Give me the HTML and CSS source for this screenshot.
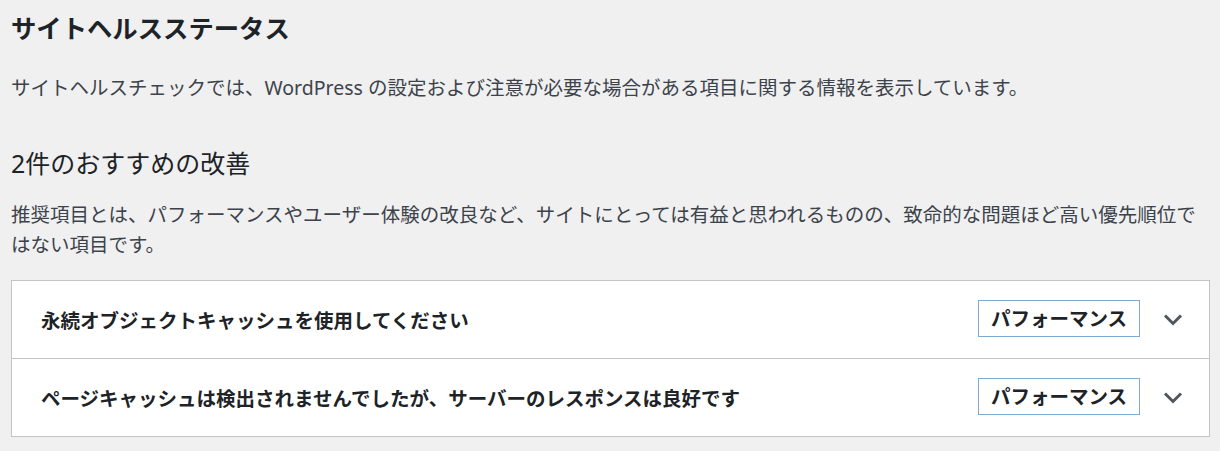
FILE: index.html
```html
<html>
    <head>
        <title>サイトヘルスステータス</title>
        <link rel="stylesheet" href="styles.css">
    </head>
    <body>
        <div class="wrap">
            <h1 class="title">サイトヘルスステータス</h1>
            <p class="intro">サイトヘルスチェックでは、WordPress の設定および注意が必要な場合がある項目に関する情報を表示しています。</p>

            <h2 class="issues-title">2件のおすすめの改善</h2>
            <p class="issues-desc">推奨項目とは、パフォーマンスやユーザー体験の改良など、サイトにとっては有益と思われるものの、致命的な問題ほど高い優先順位ではない項目です。</p>

            <!-- recommended items -->
            <div class="accordion">
                <div class="accordion-row">
                    <span class="accordion-title">永続オブジェクトキャッシュを使用してください</span>
                    <span class="badge">パフォーマンス</span>
                    <svg class="chevron" width="20" height="14" viewBox="0 0 20 14"><polyline points="2,2.5 10,10.5 18,2.5" fill="none" stroke="#50575e" stroke-width="3"/></svg>
                </div>
                <div class="accordion-row">
                    <span class="accordion-title">ページキャッシュは検出されませんでしたが、サーバーのレスポンスは良好です</span>
                    <span class="badge">パフォーマンス</span>
                    <svg class="chevron" width="20" height="14" viewBox="0 0 20 14"><polyline points="2,2.5 10,10.5 18,2.5" fill="none" stroke="#50575e" stroke-width="3"/></svg>
                </div>
            </div>
        </div>
    </body>
</html>
```

FILE: styles.css
```css
body {
    margin: 0;
    background: #f0f0f1;
    color: #3c434a;
    font-family: "Noto Sans", "Noto Sans CJK JP", sans-serif;
}

.wrap {
    width: 1199px;
    padding: 12px 0 0 11px;
}

.title {
    margin: 0;
    font-size: 25.35px;
    line-height: 33px;
    font-weight: bold;
    color: #1d2327;
}

.intro {
    margin: 28px 0 0;
    font-size: 19.5px;
    line-height: 30px;
}

.issues-title {
    margin: 43.5px 0 0;
    font-size: 25px;
    line-height: 33px;
    font-weight: normal;
    color: #1d2327;
}

.issues-desc {
    margin: 20.5px 0 0;
    font-size: 19.5px;
    line-height: 30px;
}

.accordion {
    margin-top: 20px;
    background: #fff;
    border: 1px solid #c3c4c7;
}

.accordion-row {
    display: flex;
    align-items: center;
    height: 77px;
    padding: 0 26px 0 29px;
}

.accordion-row + .accordion-row {
    border-top: 1px solid #c3c4c7;
}

.accordion-title {
    flex: 1;
    font-size: 19.5px;
    font-weight: bold;
    color: #1d2327;
}

.badge {
    box-sizing: border-box;
    height: 37px;
    line-height: 35px;
    padding: 0 12px;
    border: 1px solid #7eaad0;
    font-size: 19.5px;
    font-weight: bold;
    color: #1d2327;
    margin-top: -2px;
}

.chevron {
    margin-left: 23px;
}
```
